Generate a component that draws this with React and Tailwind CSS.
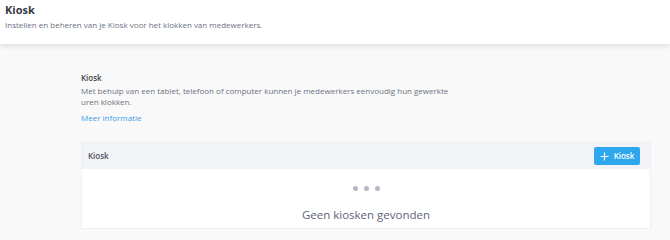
import React from 'react';

export default function App() {
  return (
    <div className="min-h-[240px] bg-[#f9f9f9] font-['Open_Sans',sans-serif]">
      {/* Header */}
      <div className="h-[44px] bg-white px-[5px] pt-[2px] shadow-[0_2px_6px_rgba(0,0,0,0.12)]">
        <h1 className="text-[11px] font-bold leading-[16px] text-[#333a45]">Kiosk</h1>
        <p className="mt-[1px] text-[8px] leading-[12px] text-[#6b7280]">
          Instellen en beheren van je Kiosk voor het klokken van medewerkers.
        </p>
      </div>

      {/* Content */}
      <div className="ml-[81px] mr-[19px] pt-[28px]">
        <h2 className="text-[8px] font-semibold leading-[12px] text-[#3b3f47]">Kiosk</h2>
        <p className="mt-[1px] w-[370px] text-[8px] leading-[11px] text-[#6b7280]">
          Met behulp van een tablet, telefoon of computer kunnen je medewerkers eenvoudig hun gewerkte uren klokken.
        </p>
        <a className="mt-[5px] block text-[8px] leading-[12px] text-[#3a9be6]">Meer informatie</a>

        <div className="mt-[18px] border border-[#eef0f3] bg-white">
          <div className="flex h-[26px] items-center justify-between bg-[#f2f3f7] pl-[6px] pr-[10px]">
            <span className="text-[8px] font-semibold text-[#4b5160]">Kiosk</span>
            <button className="flex h-[18px] w-[46px] items-center justify-center gap-[5px] rounded-[2px] bg-[#2ea7ef] text-[8px] font-semibold text-white">
              <svg width="9" height="9" viewBox="0 0 10 10" fill="none" stroke="white" strokeWidth="1.3">
                <path d="M5 0.5v9M0.5 5h9" />
              </svg>
              Kiosk
            </button>
          </div>
          <div className="flex h-[59px] flex-col items-center pt-[17px]">
            <div className="flex gap-[6px]">
              <span className="h-[5px] w-[5px] rounded-full bg-[#b4b8c4]" />
              <span className="h-[5px] w-[5px] rounded-full bg-[#b4b8c4]" />
              <span className="h-[5px] w-[5px] rounded-full bg-[#b4b8c4]" />
            </div>
            <p className="mt-[16px] text-[11.5px] leading-[16px] text-[#5d6577]">Geen kiosken gevonden</p>
          </div>
        </div>
      </div>
    </div>
  );
}
